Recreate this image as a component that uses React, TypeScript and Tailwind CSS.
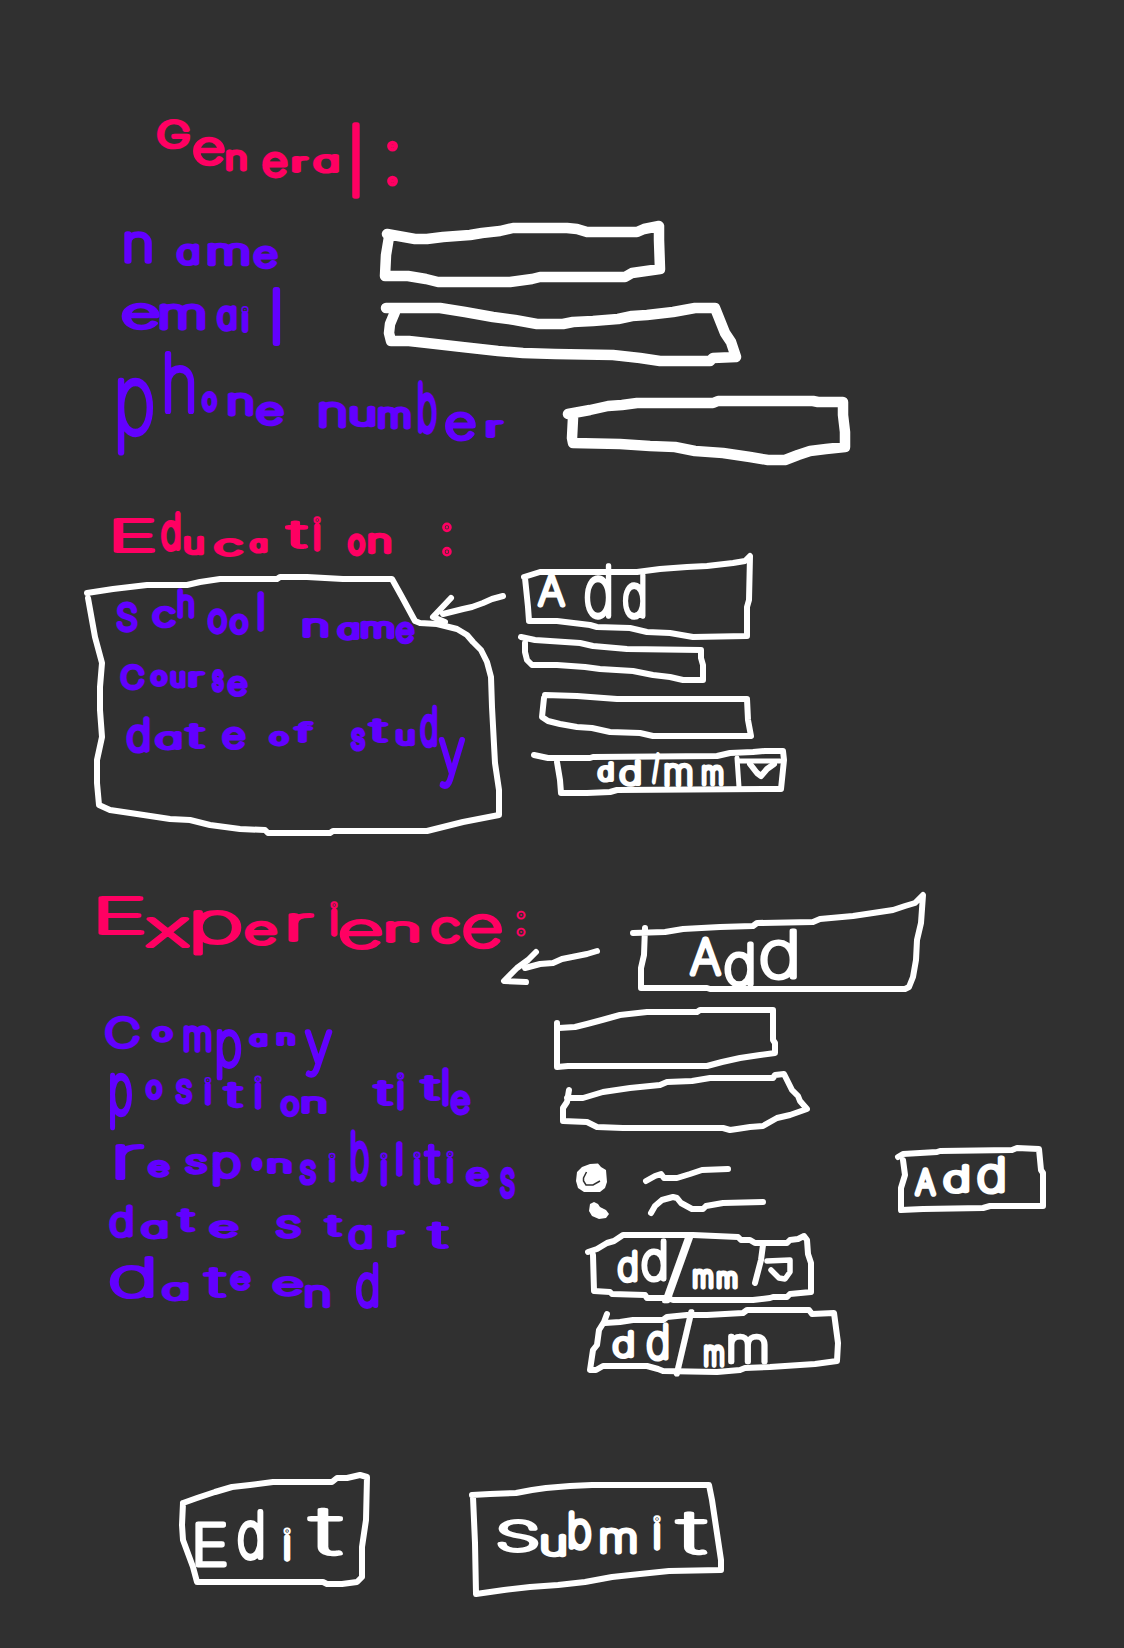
import React from "react";

type Box = [number, number, number, number];

const FONT = 'Inter, "Open Sans", sans-serif';

const metricsCache: Record<string, { left: number; right: number; up: number; down: number; advance: number }> = {};
let measuring: CanvasRenderingContext2D | null = null;

/** Ink extents of a character at a font size of 1. */
function metricsOf(ch: string) {
  if (!metricsCache[ch]) {
    measuring = measuring ?? document.createElement("canvas").getContext("2d")!;
    measuring.font = `100 200px ${FONT}`;
    const m = measuring.measureText(ch);
    metricsCache[ch] = {
      left: -m.actualBoundingBoxLeft / 200,
      right: m.actualBoundingBoxRight / 200,
      up: m.actualBoundingBoxAscent / 200,
      down: m.actualBoundingBoxDescent / 200,
      advance: m.width / 200,
    };
  }
  return metricsCache[ch];
}

/** Marker lettering: every letter fills its own box [left, top, right, bottom]. */
function Lettering({ text, boxes, pen = 6 }: { text: string; boxes: Box[]; pen?: number }) {
  let n = 0;
  return (
    <text
      fill="currentColor"
      stroke="currentColor"
      strokeLinejoin="round"
      className="font-thin [font-feature-settings:'cv11','calt'_0] [font-family:Inter,'Open_Sans',sans-serif]"
    >
      {Array.from(text).map((ch, i) => {
        if (ch === " ") return " ";
        const [x0, y0, x1, y1] = boxes[n++];
        const m = metricsOf(ch);
        const size = (y1 - y0 - pen) / (m.up + m.down);
        const inkWidth = (m.right - m.left) * size;
        const narrow = "il:".includes(ch);
        const stretch = narrow ? 1 : Math.min(2, Math.max(0.55, (x1 - x0 - pen) / inkWidth));
        const x = (x0 + x1) / 2 - ((m.left + m.right) / 2) * size * stretch;
        // The stroke is stretched along with the letter, so wide letters get a finer pen.
        const nib = ch === ":" ? pen + 1 : (pen - 0.7) / Math.pow(stretch, 0.45);
        return (
          <tspan
            key={i}
            x={x.toFixed(2)}
            y={(y1 - pen / 2 - m.down * size).toFixed(2)}
            fontSize={size.toFixed(2)}
            strokeWidth={nib.toFixed(2)}
            textLength={(m.advance * size * stretch).toFixed(2)}
            lengthAdjust="spacingAndGlyphs"
          >
            {ch}
          </tspan>
        );
      })}
    </text>
  );
}

/** One piece of the sketch; `view` is its [x, y, width, height] on the board. */
function Piece({ view, className = "", children }: { view: Box; className?: string; children: React.ReactNode }) {
  return (
    <svg
      viewBox={view.join(" ")}
      width={view[2]}
      height={view[3]}
      className={`block shrink-0 overflow-visible ${className}`}
    >
      {children}
    </svg>
  );
}

function Stroke({ points, pen = 6 }: { points: string; pen?: number }) {
  return (
    <polyline
      points={points}
      fill="none"
      stroke="currentColor"
      strokeWidth={pen}
      strokeLinecap="round"
      strokeLinejoin="round"
    />
  );
}

function General() {
  return (
    <section className="h-[400px]">
      <h2 className="ml-[150px] text-[#ff0062]">
        <Piece view={[150, 112, 260, 100]}>
          <Lettering
            text="General:"
            boxes={[
              [157, 118, 190, 150], [193, 136, 225, 167], [226, 149, 247, 172], [262, 151, 288, 179],
              [290, 155, 311, 174], [313, 153, 338, 174], [353, 122, 359, 199], [384, 141, 401, 186],
            ]}
          />
        </Piece>
      </h2>
      <div className="mt-1 ml-[116px] flex h-[76px] gap-[92px]">
        <div className="text-[#6200ff]">
          <Piece view={[116, 216, 170, 76]}>
            <Lettering text="name" pen={6.3} boxes={[[124, 231, 152, 264], [176, 243, 199, 267], [208, 242, 249, 267], [253, 245, 278, 270]]} />
          </Piece>
        </div>
        <Piece view={[378, 216, 290, 76]}>
          <Stroke pen={10.5} points="387,234 415,239 427,239 443,237 470,235 482,233 500,231 513,228 567,228 577,229 587,232 637,232 644,229 659,226 659,240 660,269 632,273 625,277 540,277 532,279 510,282 438,282 426,279 408,276 385,276 386,255 389,237" />
        </Piece>
      </div>
      <div className="ml-[116px] flex h-[58px] gap-[92px]">
        <div className="text-[#6200ff]">
          <Piece view={[116, 292, 170, 58]}>
            <Lettering text="email" pen={6.5} boxes={[[122, 302, 159, 331], [160, 303, 205, 331], [216, 305, 237, 332], [240, 306, 250, 333], [270, 286, 283, 346]]} />
          </Piece>
        </div>
        <Piece view={[378, 292, 368, 58]}>
          <Stroke pen={10.5} points="386,308 440,308 465,312 493,317 515,320 537,324 563,324 573,322 593,321 618,319 632,316 647,315 673,312 695,308 715,308 725,333 731,342 736,357 713,358 710,361 660,361 640,358 613,355 555,354 523,353 498,351 480,349 462,347 427,343 409,341 391,341 389,333 390,324 395,312" />
        </Piece>
      </div>
      <div className="ml-[116px] flex h-[120px] gap-11">
        <div className="text-[#6200ff]">
          <Piece view={[116, 350, 400, 120]}>
            <Lettering
              text="phone number"
              pen={6.3}
              boxes={[
                [117, 377, 154, 455], [164, 351, 195, 414], [201, 391, 218, 413], [228, 392, 253, 417], [256, 401, 284, 427],
                [319, 401, 346, 429], [350, 405, 375, 428], [378, 406, 411, 430], [417, 381, 438, 434], [445, 411, 476, 442], [482, 419, 508, 439],
              ]}
            />
          </Piece>
        </div>
        <Piece view={[560, 350, 300, 120]}>
          <Stroke pen={10.5} points="568,414 590,410 608,406 622,405 637,403 713,403 718,401 813,401 818,402 843,402 843,415 845,432 845,447 826,449 810,451 798,455 785,460 768,460 750,457 723,453 695,451 675,447 650,446 620,444 573,443 572,438 573,418" />
        </Piece>
      </div>
    </section>
  );
}

function Education() {
  return (
    <section>
      <h2 className="ml-[108px] text-[#ff0062]">
        <Piece view={[108, 512, 360, 56]}>
          <Lettering
            text="Education :"
            boxes={[
              [112, 517, 157, 554], [160, 512, 181, 552], [184, 535, 204, 556], [214, 537, 243, 558], [249, 537, 267, 554],
              [285, 520, 308, 551], [312, 516, 322, 552], [347, 533, 366, 556], [368, 532, 391, 555], [442, 523, 452, 556],
            ]}
          />
        </Piece>
      </h2>
      <div className="ml-[84px] flex h-[272px] items-start">
        <div className="relative h-[272px] w-[420px] shrink-0 pt-5 pl-7">
          <div className="absolute inset-0">
            <Piece view={[84, 568, 420, 272]}>
              <Stroke points="87,593 113,589 147,585 187,585 200,582 220,579 277,579 280,577 307,577 343,579 392,579 402,597 415,621 420,623 437,624 457,629 467,635 473,642 481,650 487,662 491,677 492,707 495,763 499,790 499,815 463,822 427,831 333,831 330,833 268,833 265,830 240,829 210,825 190,820 170,819 137,814 110,810 99,805 97,783 97,760 102,737 100,710 100,687 102,663 95,637 88,598" />
            </Piece>
          </div>
          <div className="relative flex flex-col text-[#6200ff]">
            <Piece view={[112, 588, 312, 60]}>
              <Lettering
                text="School name"
                boxes={[
                  [116, 601, 138, 633], [152, 605, 176, 629], [177, 588, 195, 619], [207, 608, 228, 635], [229, 613, 249, 635], [258, 591, 264, 632],
                  [303, 617, 328, 639], [337, 621, 359, 641], [361, 620, 394, 640], [395, 621, 415, 644],
                ]}
              />
            </Piece>
            <Piece view={[112, 656, 200, 48]} className="mt-2">
              <Lettering
                text="Course"
                boxes={[[120, 663, 145, 691], [150, 669, 168, 687], [170, 670, 186, 689], [189, 670, 205, 689], [211, 669, 225, 692], [227, 675, 248, 697]]}
              />
            </Piece>
            <Piece view={[112, 704, 360, 90]}>
              <Lettering
                text="date of study"
                boxes={[
                  [126, 717, 150, 754], [155, 730, 181, 751], [183, 723, 207, 751], [222, 726, 246, 750],
                  [269, 730, 289, 747], [291, 720, 316, 744],
                  [350, 727, 366, 751], [367, 718, 389, 745], [396, 728, 415, 747], [419, 705, 438, 748], [438, 737, 466, 789],
                ]}
              />
            </Piece>
          </div>
        </div>
        <Piece view={[428, 592, 80, 36]} className="relative mt-6 -ml-[76px]">
          <Stroke points="503,596 492,599 483,603 472,607 463,609 443,614" />
          <Stroke points="451,598 433,617 445,622" />
        </Piece>
        <div className="-mt-3 ml-3 flex flex-col">
          <button type="button">
            <Piece view={[520, 556, 240, 80]}>
              <Stroke points="524,577 540,572 637,572 660,569 687,567 707,566 733,563 745,561 750,556 749,600 747,607 747,636 693,637 670,633 647,632 630,628 597,627 590,625 557,621 529,621 528,607 525,578" />
              <Lettering text="Add" pen={5.5} boxes={[[537, 573, 566, 608], [584, 563, 612, 620], [622, 573, 646, 620]]} />
            </Piece>
          </button>
          <Piece view={[520, 636, 240, 52]}>
            <Stroke points="521,637 535,640 580,643 593,646 627,649 701,650 701,658 703,665 703,680 683,680 670,677 653,675 633,671 600,669 585,667 557,665 532,665 527,660 525,652 525,643" />
          </Piece>
          <Piece view={[520, 688, 240, 56]}>
            <Stroke points="545,695 577,696 617,699 747,699 748,720 751,736 653,736 640,733 610,732 592,728 577,727 560,724 548,721 542,717 544,698" />
          </Piece>
          <Piece view={[520, 744, 272, 56]}>
            <Stroke points="534,755 548,758 590,758 593,757 717,756 730,753 753,752 765,751 783,751 784,760 781,789 617,790 610,792 587,793 561,793 560,780 557,762" />
            <Stroke pen={5} points="737,758 739,787" />
            <Stroke pen={5} points="738,761 780,761" />
            <Stroke points="750,764 757,773 761,776 767,769 774,764" />
            <Lettering
              text="dd/mm"
              pen={5.3}
              boxes={[[597, 761, 614, 783], [619, 759, 641, 787], [651, 752, 661, 784], [664, 763, 693, 788], [701, 765, 724, 787]]}
            />
          </Piece>
        </div>
      </div>
    </section>
  );
}

function Experience() {
  return (
    <section className="pt-[52px]">
      <div className="ml-[88px] flex h-[100px] items-start">
        <h2 className="text-[#ff0062]">
          <Piece view={[88, 892, 444, 72]}>
            <Lettering
              text="Experience:"
              boxes={[
                [91, 895, 152, 936], [146, 916, 190, 949], [194, 909, 241, 956], [245, 920, 277, 947], [283, 912, 320, 943],
                [328, 901, 340, 937], [340, 918, 382, 951], [385, 920, 420, 944], [431, 916, 460, 945], [463, 913, 502, 950], [515, 911, 527, 936],
              ]}
            />
          </Piece>
        </h2>
        <Piece view={[500, 944, 104, 44]} className="mt-[52px] -ml-8">
          <Stroke points="597,951 587,954 577,956 562,959 553,963 540,964 525,968" />
          <Stroke points="536,952 528,960 517,968 504,981 526,982" />
        </Piece>
        <button type="button" className="ml-6">
          <Piece view={[628, 892, 300, 100]}>
            <Stroke points="633,933 665,932 683,929 720,927 753,926 757,923 813,922 820,919 853,916 873,913 893,910 905,906 915,903 923,895 921,923 917,940 916,960 913,977 909,987 905,989 710,989 707,988 641,988 641,968 644,955 645,928" />
            <Lettering text="Add" pen={5.8} boxes={[[689, 936, 722, 977], [724, 941, 754, 988], [760, 928, 797, 981]]} />
          </Piece>
        </button>
      </div>
      <div className="ml-[100px] flex items-start gap-7">
        <div className="flex flex-col pt-5 text-[#6200ff]">
          <Piece view={[100, 1012, 420, 56]}>
            <Lettering
              text="Company"
              boxes={[
                [105, 1015, 140, 1050], [152, 1025, 173, 1043], [183, 1025, 212, 1053], [216, 1029, 242, 1080],
                [249, 1032, 267, 1048], [277, 1031, 295, 1047], [304, 1029, 333, 1078],
              ]}
            />
          </Piece>
          <Piece view={[100, 1068, 420, 62]}>
            <Lettering
              text="position title"
              boxes={[
                [109, 1073, 133, 1130], [145, 1079, 163, 1100], [175, 1079, 193, 1105], [203, 1077, 213, 1106],
                [223, 1081, 243, 1110], [253, 1075, 263, 1110], [280, 1095, 300, 1117], [302, 1095, 326, 1115],
                [373, 1080, 393, 1108], [396, 1073, 405, 1111], [420, 1075, 440, 1103], [442, 1067, 449, 1107], [450, 1090, 471, 1115],
              ]}
            />
          </Piece>
          <Piece view={[100, 1130, 420, 72]}>
            <Lettering
              text="responsibilities"
              boxes={[
                [116, 1143, 144, 1181], [148, 1159, 170, 1178], [185, 1153, 207, 1175], [213, 1151, 241, 1187],
                [251, 1157, 263, 1171], [268, 1157, 291, 1175], [299, 1159, 317, 1186], [328, 1153, 336, 1183],
                [350, 1130, 370, 1182], [380, 1153, 388, 1187], [395, 1141, 404, 1177], [413, 1151, 421, 1186],
                [423, 1144, 441, 1186], [446, 1151, 454, 1184], [466, 1166, 489, 1187], [499, 1167, 516, 1199],
              ]}
            />
          </Piece>
          <Piece view={[100, 1202, 420, 50]}>
            <Lettering
              text="date start"
              boxes={[
                [109, 1205, 133, 1239], [141, 1219, 167, 1240], [177, 1208, 195, 1234], [208, 1219, 240, 1239],
                [276, 1214, 301, 1239], [322, 1215, 344, 1239], [348, 1225, 372, 1251], [385, 1229, 408, 1249], [421, 1221, 454, 1251],
              ]}
            />
          </Piece>
          <Piece view={[100, 1252, 420, 60]}>
            <Lettering
              text="date end"
              boxes={[
                [110, 1255, 153, 1300], [159, 1281, 191, 1302], [203, 1267, 226, 1300], [230, 1270, 251, 1291],
                [273, 1275, 303, 1297], [305, 1284, 330, 1309], [355, 1262, 379, 1309],
              ]}
            />
          </Piece>
        </div>
        <div className="flex flex-col pt-3">
          <Piece view={[548, 1004, 300, 68]}>
            <Stroke points="557,1023 557,1067 568,1066 707,1066 722,1062 740,1058 760,1055 775,1053 775,1043 773,1040 773,1010 700,1010 697,1012 647,1012 620,1015 602,1020 587,1024 575,1027 559,1028" />
          </Piece>
          <Piece view={[548, 1072, 300, 60]}>
            <Stroke points="569,1090 567,1102 563,1108 563,1121 587,1122 597,1127 623,1128 723,1128 730,1130 737,1129 750,1127 763,1126 777,1118 790,1115 807,1109 800,1101 798,1096 792,1090 784,1074 775,1075 773,1078 710,1078 692,1081 667,1082 660,1085 630,1088 603,1092 583,1098 567,1098" />
          </Piece>
          <div className="flex h-24 items-start gap-12">
            <Piece view={[548, 1132, 300, 96]}>
              <path
                d="M590 1164 L598 1163.5 L601 1167 L606 1170 L607 1182 L605 1188 L600 1192 H584 L578 1188 L576 1181 L577 1172 L582 1167 Z"
                fill="currentColor"
              />
              <path d="M586.5 1172 L583.5 1178 V1181 L586 1185 H593 L600 1181" fill="none" stroke="#303030" strokeWidth="1.5" />
              <path
                d="M590 1204 L594 1202 L598 1204 L600 1207 L606 1210 L609 1214 L606 1218 L599 1219 L592 1216 L589 1211 Z"
                fill="currentColor"
              />
              <Stroke points="646,1181 655,1176 661,1174 664,1178 677,1178 690,1174 702,1170 728,1169" />
              <Stroke points="651,1213 655,1206 662,1200 673,1197 677,1198 681,1203 692,1209 703,1209 706,1206 723,1203 763,1202" />
            </Piece>
            <button type="button" className="mt-3">
              <Piece view={[896, 1144, 150, 72]}>
                <Stroke points="898,1157 903,1154 937,1152 940,1151 1012,1150 1017,1148 1039,1149 1041,1170 1043,1173 1043,1206 990,1206 983,1208 923,1209 901,1210 901,1188 905,1175 903,1160" />
                <Lettering text="Add" boxes={[[914, 1167, 937, 1197], [943, 1163, 969, 1194], [977, 1156, 1005, 1195]]} />
              </Piece>
            </button>
          </div>
          <Piece view={[548, 1228, 300, 76]}>
            <Stroke points="588,1252 597,1249 607,1243 614,1241 623,1235 693,1235 738,1237 741,1240 750,1240 755,1243 787,1243 790,1240 798,1239 804,1236 807,1240 808,1254 811,1263 811,1292 790,1294 787,1297 773,1297 770,1298 753,1300 673,1300 667,1298 647,1298 645,1295 612,1294 610,1292 594,1291 593,1255" />
            <Stroke points="763,1245 761,1260 755,1283" />
            <Stroke pen={5.5} points="767,1261 790,1260 790,1272 785,1279 779,1278 771,1270" />
            <Lettering
              text="dd/mm"
              pen={5.5}
              boxes={[[617, 1249, 638, 1283], [641, 1239, 667, 1283], [662, 1233, 694, 1304], [692, 1269, 714, 1290], [716, 1271, 738, 1290]]}
            />
          </Piece>
          <Piece view={[548, 1304, 300, 76]}>
            <Stroke points="607,1314 604,1322 599,1330 597,1345 593,1350 590,1370 596,1370 603,1366 647,1366 658,1369 663,1371 717,1372 740,1370 745,1368 770,1367 800,1365 815,1364 837,1361 838,1343 834,1313 812,1314 809,1310 747,1310 743,1313 707,1315 687,1315 667,1317 663,1320 633,1320 620,1322 605,1323" />
            <Lettering
              text="dd/mm"
              pen={5.5}
              boxes={[[612, 1329, 634, 1359], [646, 1322, 669, 1361], [673, 1309, 695, 1377], [703, 1345, 725, 1368], [728, 1333, 768, 1365]]}
            />
          </Piece>
        </div>
      </div>
    </section>
  );
}

function Actions() {
  return (
    <div className="mt-[92px] ml-[180px] flex items-start gap-24">
      <button type="button">
        <Piece view={[180, 1472, 192, 116]}>
          <Stroke points="183,1503 197,1498 215,1492 232,1487 250,1485 273,1482 332,1482 337,1478 347,1478 360,1475 367,1477 366,1520 362,1547 362,1577 357,1582 342,1584 327,1584 323,1582 197,1582 193,1567 183,1540 182,1525 183,1503" />
          <Lettering text="Edit" boxes={[[195, 1521, 227, 1568], [237, 1509, 264, 1561], [282, 1527, 292, 1562], [306, 1507, 344, 1558]]} />
        </Piece>
      </button>
      <button type="button">
        <Piece view={[468, 1472, 260, 128]}>
          <Stroke points="472,1495 490,1494 516,1493 532,1490 546,1488 570,1486 592,1485 709,1485 712,1500 715,1520 721,1560 721,1570 669,1571 640,1574 612,1577 585,1582 558,1585 530,1587 504,1590 476,1594 475,1543 473,1497" />
          <Lettering
            text="Submit"
            boxes={[
              [498, 1518, 538, 1554], [541, 1533, 566, 1558], [568, 1510, 592, 1551],
              [600, 1527, 637, 1555], [652, 1515, 662, 1551], [675, 1510, 707, 1557],
            ]}
          />
        </Piece>
      </button>
    </div>
  );
}

export default function App() {
  return (
    <main className="flex h-[1648px] w-[1124px] flex-col overflow-hidden bg-[#303030] pt-28 text-white">
      <General />
      <Education />
      <Experience />
      <Actions />
    </main>
  );
}
